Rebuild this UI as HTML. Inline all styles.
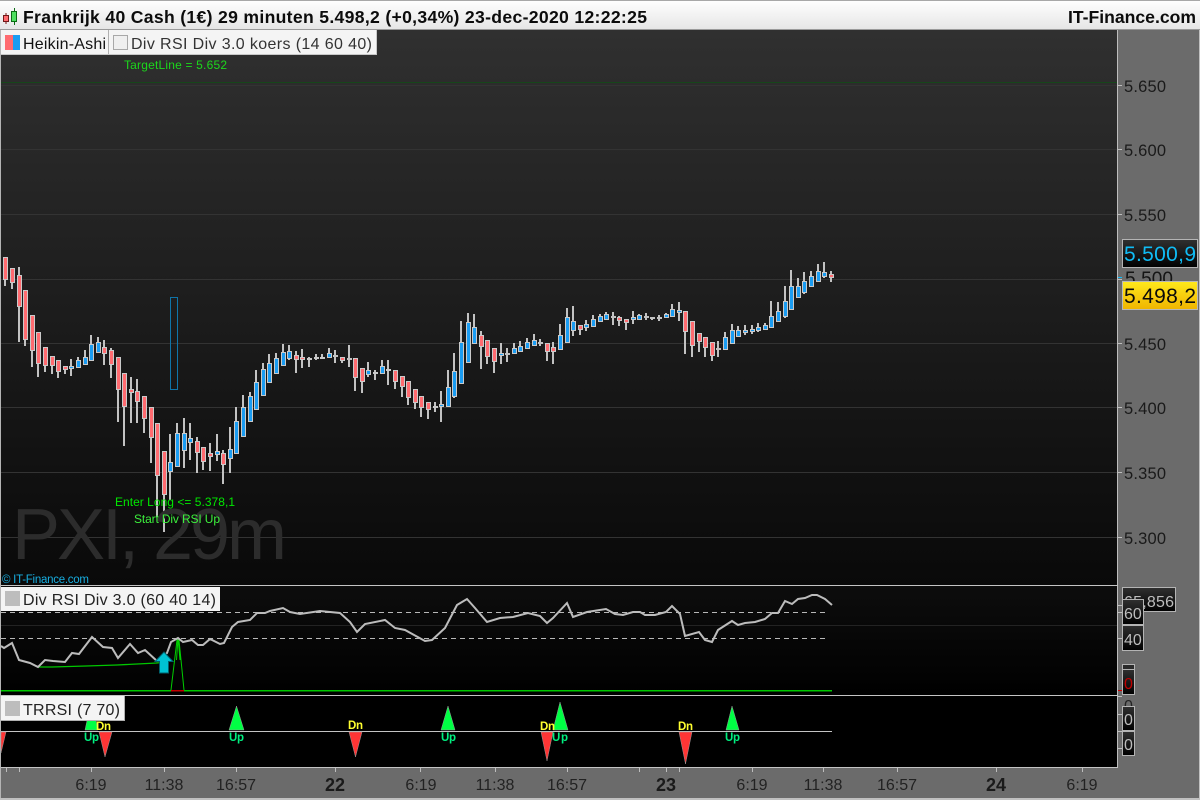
<!DOCTYPE html>
<html lang="nl">
<head>
<meta charset="utf-8">
<title>Frankrijk 40 Cash</title>
<style>
html,body{margin:0;padding:0;background:#6b6b6b;width:1200px;height:800px;overflow:hidden}
svg{display:block}
text{font-family:"Liberation Sans",sans-serif}
.c{shape-rendering:crispEdges}
.ax{font-size:16.5px;fill:#1a1a1a}
.tm{font-size:16px;fill:#222;text-anchor:middle}
.dt{font-size:18px;font-weight:bold;fill:#1a1a1a;text-anchor:middle}
.up{font-size:11.5px;font-weight:bold;fill:#00f080}
.dn{font-size:11.5px;font-weight:bold;fill:#ffff30}
</style>
</head>
<body>
<svg width="1200" height="800" viewBox="0 0 1200 800" xmlns="http://www.w3.org/2000/svg">
<defs>
<linearGradient id="gT" x1="0" y1="0" x2="0" y2="1"><stop offset="0" stop-color="#ffffff"/><stop offset="1" stop-color="#e6e6e6"/></linearGradient>
<linearGradient id="gM" x1="0" y1="0" x2="0" y2="1"><stop offset="0" stop-color="#303030"/><stop offset="1" stop-color="#090909"/></linearGradient>
<linearGradient id="gR" x1="0" y1="0" x2="0" y2="1"><stop offset="0" stop-color="#0d0d0d"/><stop offset="1" stop-color="#000000"/></linearGradient>
<linearGradient id="gB" x1="0" y1="0" x2="0" y2="1"><stop offset="0" stop-color="#303030"/><stop offset="1" stop-color="#000000"/></linearGradient>
<linearGradient id="gY" x1="0" y1="0" x2="0" y2="1"><stop offset="0" stop-color="#ffe91c"/><stop offset="1" stop-color="#f0b400"/></linearGradient>
</defs>

<!-- backgrounds -->
<rect width="1200" height="800" fill="#6b6b6b"/>
<rect x="0" y="0" width="1200" height="29" fill="url(#gT)"/>
<rect x="0" y="0" width="1200" height="1" fill="#a8a8a8"/>
<rect x="0" y="29" width="1200" height="1" fill="#9a9a9a"/>
<rect x="1" y="30" width="1116" height="555" fill="url(#gM)"/>
<rect x="1" y="586" width="1116" height="109" fill="url(#gR)"/>
<rect x="1" y="696" width="1116" height="71" fill="#000"/>

<g class="c">
<rect x="0" y="30" width="1" height="770" fill="#b4b4b4"/>
<rect x="1117" y="30" width="1" height="738" fill="#bdbdbd"/>
<rect x="1" y="585" width="1117" height="1" fill="#c4c4c4"/>
<rect x="1" y="695" width="1117" height="1" fill="#c4c4c4"/>
<rect x="1" y="767" width="1117" height="1" fill="#c4c4c4"/>
<rect x="0" y="798" width="1200" height="2" fill="#c0c0c0"/>
<rect x="1199" y="30" width="1" height="770" fill="#c0c0c0"/>

<!-- grid -->
<path d="M1 85.5H1117M1 149.5H1117M1 214.5H1117M1 279.5H1117M1 343.5H1117M1 407.5H1117M1 472.5H1117M1 537.5H1117" stroke="#333" fill="none"/>
<path d="M1 82.5H1117" stroke="#16461a" fill="none"/>
<path d="M1 625.5H1117" stroke="#232323" fill="none"/>

<!-- axis ticks -->
<path d="M1118 85.5h4M1118 149.5h4M1118 214.5h4M1118 279.5h4M1118 343.5h4M1118 407.5h4M1118 472.5h4M1118 537.5h4M1118 605.5h4M1118 612.5h4M1118 638.5h4M1118 696.5h4M1118 714.5h4M1118 731.5h4M1118 748.5h4" stroke="#bdbdbd" fill="none"/>
<path d="M1118 277.5h4" stroke="#10bfff" fill="none"/>
<path d="M1118 690.5h4" stroke="#d00000" fill="none"/>

<!-- time ticks -->
<path d="M6.5 768v4M19.5 768v4M91.5 768v4M164.5 768v4M236.5 768v4M335.5 768v4M420.5 768v4M495.5 768v4M567.5 768v4M639.5 768v4M666.5 768v4M679.5 768v4M752.5 768v4M823.5 768v4M897.5 768v4M996.5 768v4M1082.5 768v4" stroke="#bdbdbd" fill="none"/>

<!-- wicks -->
<path stroke="#c2c2c2" stroke-width="2" fill="none" d="M5 257V286M12 268V289M19 267V342M25 290V346M32 315V367M38 332V377M45 347V372M52 356V374M58 360V378M65 366V374M71 359V376M78 357V368M85 350V365M91 335V361M98 337V353M104 340V365M111 348V378M118 357V422M124 373V446M131 377V423M137 379V423M144 396V433M151 407V463M157 423V517M164 451V532M170 434V500M177 423V467M184 418V468M190 423V460M197 437V473M203 447V470M210 443V471M217 434V461M223 450V484M230 427V473M236 407V454M243 395V437M250 392V422M256 370V410M263 363V396M269 354V383M276 353V374M283 344V366M289 345V360M296 351V373M302 349V368M309 357V367M316 354V360M322 354V359M329 348V358M335 350V363M342 357V363M349 345V367M355 358V391M362 368V393M368 362V377M375 370V380M382 360V374M388 360V385M395 370V389M402 376V397M408 381V405M415 389V409M421 396V417M428 402V419M435 402V412M441 391V422M448 370V407M454 353V398M461 321V384M468 313V363M474 314V344M481 331V369M487 340V364M494 348V373M501 343V364M507 348V362M514 343V354M520 341V352M527 338V349M534 334V346M540 339V346M547 343V361M553 342V364M560 324V350M567 308V343M573 306V336M580 325V335M586 320V331M593 315V327M600 314V322M606 312V320M613 312V325M619 316V326M626 319V330M633 311V324M639 314V320M646 313V320M652 318V320M659 315V321M666 313V318M672 304V317M679 302V321M685 311V354M692 321V357M699 333V352M705 337V357M712 342V361M718 341V357M725 332V350M732 324V344M738 326V337M745 325V335M752 325V334M758 323V332M765 323V330M771 301V328M778 302V322M785 286V318M791 270V310M798 278V298M804 272V294M811 271V287M818 264V282M824 262V278M831 271V282"/>
<!-- doji bars -->
<path stroke="#c2c2c2" stroke-width="2" fill="none" d="M333 356h5M347 359h5M505 354h5M538 343h5M611 317h5M644 317h5M650 318h5M657 318h5M716 349h5"/>
<!-- red bodies -->
<path stroke="#cacaca" fill="#ff6b70" d="M3.5 257.5h4v22h-4zM10.5 268.5h4v14h-4zM17.5 275.5h4v31h-4zM23.5 290.5h4v49h-4zM30.5 315.5h4v35h-4zM36.5 332.5h4v31h-4zM43.5 347.5h4v18h-4zM50.5 356.5h4v9h-4zM56.5 360.5h4v11h-4zM63.5 366.5h4v3h-4zM102.5 347.5h4v6h-4zM109.5 350.5h4v14h-4zM116.5 357.5h4v32h-4zM122.5 373.5h4v33h-4zM129.5 389.5h4v3h-4zM135.5 391.5h4v10h-4zM142.5 396.5h4v22h-4zM149.5 407.5h4v30h-4zM155.5 423.5h4v52h-4zM162.5 451.5h4v43h-4zM195.5 441.5h4v11h-4zM201.5 447.5h4v14h-4zM208.5 453.5h4v3h-4zM221.5 453.5h4v11h-4zM294.5 355.5h4v4h-4zM300.5 357.5h4v2h-4zM307.5 358.5h4v1h-4zM340.5 357.5h4v3h-4zM353.5 358.5h4v19h-4zM360.5 368.5h4v13h-4zM373.5 372.5h4v1h-4zM386.5 369.5h4v1h-4zM393.5 370.5h4v11h-4zM400.5 376.5h4v10h-4zM406.5 381.5h4v16h-4zM413.5 389.5h4v13h-4zM419.5 396.5h4v11h-4zM426.5 402.5h4v7h-4zM433.5 406.5h4v1h-4zM479.5 335.5h4v11h-4zM485.5 340.5h4v16h-4zM492.5 348.5h4v13h-4zM545.5 343.5h4v8h-4zM551.5 347.5h4v4h-4zM578.5 325.5h4v4h-4zM617.5 317.5h4v3h-4zM624.5 319.5h4v3h-4zM683.5 311.5h4v20h-4zM690.5 321.5h4v24h-4zM697.5 333.5h4v8h-4zM703.5 337.5h4v10h-4zM710.5 342.5h4v13h-4zM829.5 274.5h4v3h-4z"/>
<!-- blue bodies -->
<path stroke="#cacaca" fill="#1a9cf2" d="M69.5 366.5h4v2h-4zM76.5 360.5h4v7h-4zM83.5 357.5h4v7h-4zM89.5 344.5h4v16h-4zM96.5 342.5h4v10h-4zM168.5 462.5h4v9h-4zM175.5 433.5h4v33h-4zM182.5 433.5h4v17h-4zM188.5 438.5h4v4h-4zM215.5 451.5h4v3h-4zM228.5 449.5h4v9h-4zM234.5 421.5h4v32h-4zM241.5 407.5h4v29h-4zM248.5 396.5h4v25h-4zM254.5 382.5h4v27h-4zM261.5 369.5h4v26h-4zM267.5 363.5h4v19h-4zM274.5 358.5h4v15h-4zM281.5 352.5h4v13h-4zM287.5 351.5h4v7h-4zM314.5 357.5h4v1h-4zM320.5 357.5h4v1h-4zM327.5 353.5h4v4h-4zM366.5 370.5h4v4h-4zM380.5 366.5h4v7h-4zM439.5 404.5h4v2h-4zM446.5 387.5h4v19h-4zM452.5 371.5h4v25h-4zM459.5 342.5h4v41h-4zM466.5 322.5h4v40h-4zM472.5 327.5h4v16h-4zM499.5 353.5h4v2h-4zM512.5 348.5h4v5h-4zM518.5 346.5h4v5h-4zM525.5 342.5h4v6h-4zM532.5 340.5h4v5h-4zM558.5 335.5h4v14h-4zM565.5 317.5h4v25h-4zM571.5 321.5h4v9h-4zM584.5 324.5h4v3h-4zM591.5 319.5h4v7h-4zM598.5 316.5h4v5h-4zM604.5 314.5h4v5h-4zM631.5 317.5h4v2h-4zM637.5 315.5h4v4h-4zM664.5 314.5h4v3h-4zM670.5 309.5h4v7h-4zM677.5 310.5h4v2h-4zM723.5 337.5h4v12h-4zM730.5 330.5h4v13h-4zM736.5 330.5h4v6h-4zM743.5 330.5h4v2h-4zM750.5 329.5h4v2h-4zM756.5 327.5h4v3h-4zM763.5 325.5h4v4h-4zM769.5 316.5h4v11h-4zM776.5 311.5h4v10h-4zM783.5 301.5h4v15h-4zM789.5 286.5h4v23h-4zM796.5 286.5h4v11h-4zM802.5 281.5h4v11h-4zM809.5 276.5h4v10h-4zM816.5 271.5h4v10h-4zM822.5 272.5h4v4h-4z"/>
<!-- signal box -->
<rect x="170.5" y="297.5" width="7" height="92" fill="none" stroke="#0f74a8"/>
</g>

<!-- large watermark -->
<text x="12" y="559" font-size="72" fill="#2c2c2c" textLength="275">PXI, 29m</text>
<text x="2" y="583" font-size="11.5" fill="#18aee0" textLength="87">© IT-Finance.com</text>

<!-- chart labels -->
<text x="124" y="69" font-size="12" fill="#1cd81c" textLength="103">TargetLine = 5.652</text>
<text x="115" y="506" font-size="12" fill="#00e800" textLength="120">Enter Long &lt;= 5.378,1</text>
<text x="134" y="523" font-size="12" fill="#3cf03c" textLength="86">Start Div RSI Up</text>

<!-- title bar -->
<g class="c">
<path d="M6 13v11" stroke="#7a1010"/>
<rect x="3.5" y="15.5" width="5" height="6" fill="#ff6b70" stroke="#701818"/>
<path d="M14.5 8v17" stroke="#0b6b14"/>
<rect x="11.5" y="11.5" width="5" height="10" fill="#4fe060" stroke="#0b6b14"/>
</g>
<text x="23" y="23" font-size="17.6" font-weight="bold" fill="#0c0c0c" textLength="624">Frankrijk 40 Cash (1€) 29 minuten 5.498,2 (+0,34%) 23-dec-2020 12:22:25</text>
<text x="1068" y="23" font-size="17.6" font-weight="bold" fill="#0c0c0c" textLength="128">IT-Finance.com</text>

<!-- legends -->
<g class="c">
<rect x="1" y="30" width="107" height="24" fill="#f4f4f4"/>
<rect x="109" y="30" width="267" height="24" fill="#f4f4f4"/>
<rect x="108" y="30" width="1" height="24" fill="#b0b0b0"/>
<rect x="376" y="30" width="1" height="24" fill="#c8c8c8"/>
<rect x="1" y="54" width="376" height="1" fill="#c8c8c8"/>
<rect x="5" y="35" width="8" height="15" fill="#ff6b70"/>
<rect x="13" y="35" width="7" height="15" fill="#1a9cf2"/>
<rect x="113.5" y="35.5" width="14" height="14" fill="#efefef" stroke="#a8a8a8"/>
<rect x="1" y="587" width="219" height="24" fill="#f4f4f4"/>
<rect x="5" y="591" width="15" height="15" fill="#bdbdbd"/>
</g>
<text x="23" y="49" font-size="16" fill="#111" textLength="83">Heikin-Ashi</text>
<text x="131" y="49" font-size="16" fill="#333" textLength="241">Div RSI Div 3.0 koers (14 60 40)</text>
<text x="23" y="605" font-size="16" fill="#222" textLength="193">Div RSI Div 3.0 (60 40 14)</text>

<!-- RSI panel -->
<path d="M1 612.5H828M1 638.5H828" stroke="#b8b8b8" stroke-dasharray="5 4" fill="none" class="c"/>
<path d="M38 667L52 667L86 666L117 665L157 663L165 662" stroke="#00c800" stroke-width="1.3" fill="none"/>
<path d="M1 690.5H832" stroke="#00c800" stroke-width="1.5" fill="none" class="c"/>
<path d="M171 690.5H184" stroke="#c00000" stroke-width="1.5" fill="none" class="c"/>
<path d="M171 690L177 640L178 638L179 640L184 690M176.5 660L178 638L180 660" stroke="#00d000" stroke-width="1" fill="none"/>
<polyline fill="none" stroke="#bcbcbc" stroke-width="2" points="1,646 4,648 12,643 19,660 30,663 38,667 45,660 53,661 65,662 72,653 79,654 92,637 103,647 112,648 118,658 130,644 138,653 145,650 157,661 167,653 171,642 178,638 183,642 192,640 198,645 203,645 210,639 220,644 224,643 232,627 238,622 250,620 257,613 265,613 270,611 283,608 290,612 300,614 320,611 340,613 350,622 357,632 365,624 385,620 395,628 405,630 425,641 432,640 445,628 457,605 467,599 475,608 487,622 500,618 513,617 528,613 540,616 547,623 553,618 567,603 573,617 587,612 606,609 615,614 623,615 633,612 640,612 645,615 655,615 666,612 672,606 680,614 685,636 699,632 705,640 712,642 718,630 732,621 738,625 745,623 755,622 765,619 772,613 778,613 785,601 792,604 798,599 805,598 812,595 817,595 825,599 832,605"/>
<path d="M164 652L173 661.5H168.5V673H159.5V661.5H155Z" fill="#00c2d2" stroke="#00606c" stroke-width="1"/>

<!-- TRRSI panel -->
<path d="M1 731.5H832" stroke="#c4c4c4" fill="none" class="c"/>
<g stroke="#9a9a9a" stroke-width=".5">
<path d="M85 730L91.5 700L98 730Z" fill="#00ff44"/>
<path d="M229 730L236.5 706L244 730Z" fill="#00ff44"/>
<path d="M441 730L448 706L455 730Z" fill="#00ff44"/>
<path d="M553 730L560 702L568 730Z" fill="#00ff44"/>
<path d="M726 730L732 706L739 730Z" fill="#00ff44"/>
<path d="M1 732H6L1 753Z" fill="#ff3535"/>
<path d="M99 732H112L105 757Z" fill="#ff3535"/>
<path d="M349 732H362L355.5 757Z" fill="#ff3535"/>
<path d="M541 732H553L547 761Z" fill="#ff3535"/>
<path d="M679 732H692L685.5 764Z" fill="#ff3535"/>
</g>
<g class="c">
<rect x="1" y="696" width="123" height="24" fill="#f4f4f4"/>
<rect x="1" y="720" width="124" height="1" fill="#b0b0b0"/>
<rect x="124" y="696" width="1" height="25" fill="#b0b0b0"/>
<rect x="5" y="701" width="15" height="15" fill="#bdbdbd"/>
</g>
<text x="23" y="715" font-size="16" fill="#222" textLength="97">TRRSI (7 70)</text>
<text x="84" y="741" class="up" textLength="15">Up</text>
<text x="229" y="741" class="up" textLength="15">Up</text>
<text x="441" y="741" class="up" textLength="15">Up</text>
<text x="552" y="741" class="up" textLength="16">Up</text>
<text x="725" y="741" class="up" textLength="15">Up</text>
<text x="96" y="730" class="dn" textLength="15">Dn</text>
<text x="348" y="729" class="dn" textLength="15">Dn</text>
<text x="540" y="730" class="dn" textLength="15">Dn</text>
<text x="678" y="730" class="dn" textLength="15">Dn</text>

<!-- axis labels -->
<text class="ax" x="1124" y="92" textLength="42">5.650</text>
<text class="ax" x="1124" y="156" textLength="42">5.600</text>
<text class="ax" x="1124" y="221" textLength="42">5.550</text>
<text x="1125" y="285" font-size="19" fill="#141414" textLength="48">5.500</text>
<text class="ax" x="1124" y="350" textLength="42">5.450</text>
<text class="ax" x="1124" y="414" textLength="42">5.400</text>
<text class="ax" x="1124" y="479" textLength="42">5.350</text>
<text class="ax" x="1124" y="544" textLength="42">5.300</text>

<!-- price boxes -->
<rect x="1122.5" y="239.5" width="75" height="28" fill="url(#gB)" stroke="#b4b4b4" class="c"/>
<text x="1124" y="261" font-size="21" fill="#10bcf5" textLength="72">5.500,9</text>
<rect x="1122.5" y="281.5" width="75" height="28" fill="url(#gY)" stroke="#b8b8b8" class="c"/>
<text x="1124" y="303" font-size="21" fill="#0a0a0a" textLength="72">5.498,2</text>

<!-- indicator value boxes -->
<rect x="1122.5" y="587.5" width="53" height="24" fill="url(#gB)" stroke="#b4b4b4" class="c"/>
<text x="1124" y="607" font-size="16" fill="#bdbdbd" textLength="50">65,856</text>
<rect x="1122.5" y="599.5" width="21" height="25" fill="url(#gB)" stroke="#b4b4b4" class="c"/>
<text x="1124" y="619" font-size="16" fill="#bdbdbd">60</text>
<rect x="1122.5" y="625.5" width="21" height="25" fill="url(#gB)" stroke="#b4b4b4" class="c"/>
<text x="1124" y="645" font-size="16" fill="#bdbdbd">40</text>
<rect x="1122.5" y="664.5" width="12" height="5" fill="#2a2a2a" stroke="#b4b4b4" class="c"/>
<rect x="1122.5" y="669.5" width="12" height="25" fill="url(#gB)" stroke="#b4b4b4" class="c"/>
<text x="1124" y="689" font-size="16" fill="#c00000">0</text>
<text x="1124" y="711" font-size="16" fill="#222">0</text>
<rect x="1122.5" y="706.5" width="12" height="24" fill="url(#gB)" stroke="#b4b4b4" class="c"/>
<text x="1124" y="725" font-size="16" fill="#bdbdbd">0</text>
<rect x="1122.5" y="731.5" width="12" height="24" fill="url(#gB)" stroke="#b4b4b4" class="c"/>
<text x="1124" y="750" font-size="16" fill="#bdbdbd">0</text>

<!-- time labels -->
<text class="tm" x="91" y="790">6:19</text>
<text class="tm" x="164" y="790">11:38</text>
<text class="tm" x="236" y="790">16:57</text>
<text class="dt" x="335" y="791">22</text>
<text class="tm" x="421" y="790">6:19</text>
<text class="tm" x="495" y="790">11:38</text>
<text class="tm" x="567" y="790">16:57</text>
<text class="dt" x="666" y="791">23</text>
<text class="tm" x="752" y="790">6:19</text>
<text class="tm" x="823" y="790">11:38</text>
<text class="tm" x="897" y="790">16:57</text>
<text class="dt" x="996" y="791">24</text>
<text class="tm" x="1082" y="790">6:19</text>
</svg>
</body>
</html>
